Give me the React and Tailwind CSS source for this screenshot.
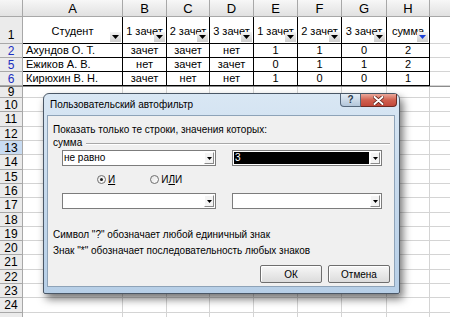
import React from "react";

const COLW = [
  "w-[23px]",
  "w-[100px]",
  "w-[44px]",
  "w-[43px]",
  "w-[44px]",
  "w-[44px]",
  "w-[44px]",
  "w-[45px]",
  "w-[43px]",
  "w-[40px]",
];
const LETTERS = ["A", "B", "C", "D", "E", "F", "G", "H", ""];
const HEADERS = ["Студент", "1 зачет", "2 зачет", "3 зачет", "1 зачет", "2 зачет", "3 зачет", "сумма"];
const DATA = [
  ["2", "Ахундов О. Т.", "зачет", "зачет", "нет", "1", "1", "0", "2"],
  ["5", "Ежиков А. В.", "нет", "зачет", "зачет", "0", "1", "1", "2"],
  ["6", "Кирюхин В. Н.", "зачет", "нет", "нет", "1", "0", "0", "1"],
];
const EMPTY_ROWS = [
  ["9", "h-[12px]"],
  ["10", "h-[14px]"],
  ["11", "h-[15px]"],
  ["12", "h-[14px]"],
  ["13", "h-[14px]"],
  ["14", "h-[15px]"],
  ["15", "h-[14px]"],
  ["16", "h-[14px]"],
  ["17", "h-[15px]"],
  ["18", "h-[14px]"],
  ["19", "h-[14px]"],
  ["20", "h-[14px]"],
  ["21", "h-[15px]"],
  ["22", "h-[14px]"],
  ["23", "h-[14px]"],
  ["24", "h-[15px]"],
  ["", "h-[14px]"],
];

function FilterBtn({ blue }) {
  return (
    <div className="absolute right-[1px] bottom-[1px] w-[11px] h-[10px] flex items-center justify-center bg-gradient-to-b from-[#f4f4f4] to-[#cdcdcd]">
      <svg width="7" height="4" viewBox="0 0 7 4">
        <path d="M0 0H7L3.5 4Z" fill={blue ? "#1a3fd6" : "#000"} />
      </svg>
    </div>
  );
}

function RowHead({ label, blue, selected, end, cls }) {
  return (
    <div
      className={
        "flex-none w-[23px] flex justify-center border-r border-b border-[#a8a8a8] text-[12px] leading-none " +
        (end ? "items-end pb-[2px] " : "items-center ") +
        (selected ? "bg-[#c9dcf2] " : "bg-[#ebebeb] ") +
        (blue ? "text-[#1b2fbf] " : "text-black ") +
        (cls || "")
      }
    >
      {label}
    </div>
  );
}

function DropBtn() {
  return (
    <div className="flex-none w-[10px] h-[12px] mr-[1px] flex items-center justify-center bg-[#f4f4f4] border border-t-white border-l-white border-r-[#8a8a8a] border-b-[#8a8a8a]">
      <svg width="5" height="3" viewBox="0 0 5 3">
        <path d="M0 0H5L2.5 3Z" fill="#000" />
      </svg>
    </div>
  );
}

function Combo({ w, children, black }) {
  return (
    <div className={"flex-none h-[16px] flex items-center border border-[#7c7c7c] bg-white " + w}>
      {black ? (
        <div className="flex-1 h-[12px] ml-[1px] mr-[1px] bg-black text-white text-[10px] leading-[12px] pl-[1px]">
          {children}
        </div>
      ) : (
        <div className="flex-1 text-[10px] leading-[12px] pl-[1px] text-black">{children}</div>
      )}
      <DropBtn />
    </div>
  );
}

function Radio({ checked }) {
  return (
    <div className="flex-none w-[9px] h-[9px] rounded-full border border-[#6f6f6f] bg-gradient-to-br from-[#e4e4e4] to-white flex items-center justify-center">
      {checked && <div className="w-[3px] h-[3px] rounded-full bg-[#1e1e1e]" />}
    </div>
  );
}

function WinButton({ children }) {
  return (
    <div className="flex-none w-[62px] h-[18px] flex items-center justify-center rounded-[2px] border border-[#6e6e6e] bg-gradient-to-b from-[#f7f7f7] to-[#dcdcdc] text-[10px] text-black shadow-[inset_1px_1px_0_#ffffff]">
      {children}
    </div>
  );
}

export default function App() {
  return (
    <div className="relative w-[450px] h-[317px] overflow-hidden bg-white font-['Liberation_Sans',Arial,sans-serif] text-black">
      {/* Column header row */}
      <div className="flex h-[17px]">
        <div className="flex-none w-[23px] border-r border-b border-[#a8a8a8] bg-gradient-to-b from-[#f6f6f6] to-[#e2e2e2]" />
        {LETTERS.map((l, i) => (
          <div
            key={i}
            className={
              "flex-none flex items-center justify-center border-r border-b border-[#a8a8a8] bg-gradient-to-b from-[#f7f7f7] to-[#e1e1e1] text-[13px] leading-none " +
              COLW[i + 1]
            }
          >
            {l}
          </div>
        ))}
      </div>

      {/* Row 1: headers */}
      <div className="flex h-[27px]">
        <RowHead label="1" end />
        {HEADERS.map((h, i) => (
          <div
            key={i}
            className={
              "relative flex-none flex items-center justify-center border-r border-b border-black text-[11px] leading-none overflow-hidden whitespace-nowrap pt-[3px] " +
              COLW[i + 1]
            }
          >
            <span>{h}</span>
            <FilterBtn blue={i === 7} />
          </div>
        ))}
        <div className={"flex-none border-r border-b border-[#d4d4d4] " + COLW[9]} />
      </div>

      {/* Data rows */}
      {DATA.map((r, ri) => (
        <div key={ri} className="flex h-[14px]">
          <RowHead label={r[0]} blue />
          {r.slice(1).map((c, ci) => (
            <div
              key={ci}
              className={
                "flex-none flex items-center border-r border-b border-black text-[11px] leading-none whitespace-nowrap " +
                (ci === 0 ? "justify-start pl-[3px] " : "justify-center ") +
                COLW[ci + 1]
              }
            >
              {c}
            </div>
          ))}
          <div className={"flex-none border-r border-b border-[#d4d4d4] " + COLW[9]} />
        </div>
      ))}

      {/* Empty rows */}
      {EMPTY_ROWS.map(([n, h], ri) => (
        <div key={ri} className={"flex " + h + (ri === 0 ? " border-t border-[#8c8c8c]" : "")}>
          <RowHead label={n} selected={n === "13"} />
          {COLW.slice(1).map((w, ci) => (
            <div key={ci} className={"flex-none border-r border-b border-[#d4d4d4] " + w} />
          ))}
        </div>
      ))}

      {/* Dialog */}
      <div className="absolute left-[43px] top-[93px] w-[357px] h-[201px] rounded-t-[6px] rounded-b-[2px] border border-[#4a5766] bg-gradient-to-b from-[#d9e7f4] via-[#c6d9ec] to-[#b7cfe7] shadow-[3px_5px_9px_rgba(0,0,0,0.55)] flex flex-col">
        <div className="flex-none h-[21px] flex items-center pl-[6px] text-[10px] text-black">
          Пользовательский автофильтр
        </div>
        {/* caption buttons */}
        <div className="absolute top-0 right-[2px] flex h-[13px]">
          <div className="w-[21px] h-[13px] flex items-center justify-center rounded-bl-[4px] border border-t-0 border-[#55677b] bg-gradient-to-b from-[#e4edf6] to-[#b3c6da] text-[10px] leading-none text-[#2b3a4a] font-bold">
            ?
          </div>
          <div className="w-[36px] h-[13px] flex items-center justify-center rounded-br-[4px] border border-t-0 border-l-0 border-[#6c2a22] bg-gradient-to-b from-[#e9a89b] via-[#d0604f] to-[#c2483a]">
            <svg width="11" height="9" viewBox="0 0 11 9">
              <path d="M1.5 1L9.5 8M9.5 1L1.5 8" stroke="#5a1e16" strokeWidth="3.5" strokeLinecap="round" />
              <path d="M1.5 1L9.5 8M9.5 1L1.5 8" stroke="#ffffff" strokeWidth="2" strokeLinecap="round" />
            </svg>
          </div>
        </div>

        <div className="flex-1 ml-[3px] mr-[4px] mb-[6px] border border-[#8ea3b8] bg-[#f0f0f0] flex flex-col pl-[5px] pr-[4px] text-[10px] leading-[13px]">
          <div className="h-[13px] mt-[7px] whitespace-nowrap">
            Показать только те строки, значения которых:
          </div>
          <div className="h-[13px] flex items-center">
            <span className="mr-[4px]">сумма</span>
            <div className="flex-1 border-t border-[#a8a8a8] border-b border-b-white mt-[2px]" />
          </div>
          <div className="flex mt-[1px] ml-[9px] gap-[16px]">
            <Combo w="w-[154px]">не равно</Combo>
            <Combo w="w-[150px]" black>
              3
            </Combo>
          </div>
          <div className="h-[13px] mt-[7px] flex items-center ml-[44px]">
            <Radio checked />
            <span className="ml-[2px] underline">И</span>
            <div className="ml-[35px]">
              <Radio />
            </div>
            <span className="ml-[2px]">
              И<span className="underline">Л</span>И
            </span>
          </div>
          <div className="flex mt-[7px] ml-[9px] gap-[16px]">
            <Combo w="w-[154px]" />
            <Combo w="w-[150px]" />
          </div>
          <div className="h-[13px] mt-[19px] whitespace-nowrap">
            Символ "?" обозначает любой единичный знак
          </div>
          <div className="h-[13px] mt-[3px] whitespace-nowrap">
            Знак "*" обозначает последовательность любых знаков
          </div>
          <div className="flex justify-end gap-[6px] mt-[8px]">
            <WinButton>ОК</WinButton>
            <WinButton>Отмена</WinButton>
          </div>
        </div>
      </div>
    </div>
  );
}
